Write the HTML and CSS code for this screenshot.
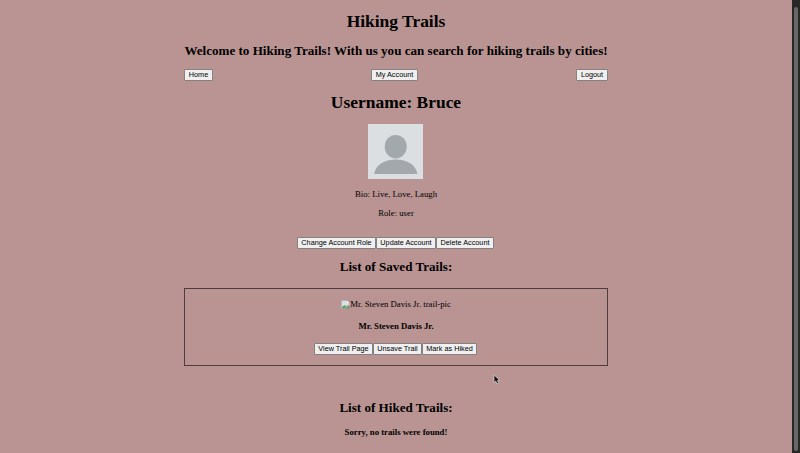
FILE: index.html
```html
<!DOCTYPE html>
<html lang="en">
<head>
<meta charset="utf-8">
<title>Hiking Trails</title>
<link rel="stylesheet" href="styles.css">
</head>
<body>
<div class="page">
  <main class="content">
    <h1 class="title">Hiking Trails</h1>
    <h2 class="welcome">Welcome to Hiking Trails! With us you can search for hiking trails by cities!</h2>
    <nav class="nav">
      <button class="w-home">Home</button>
      <button class="w-my">My Account</button>
      <button class="w-logout">Logout</button>
    </nav>
    <h1 class="username">Username: Bruce</h1>
    <svg class="avatar" viewBox="0 0 54 54">
      <rect width="54" height="54" fill="#dcdfe1"/>
      <ellipse cx="27.2" cy="22.3" rx="10.8" ry="11.6" fill="#a2a8ab"/>
      <path d="M6 49C7.5 40 16 34.8 27.2 34.8S47 40 48.5 49Z" fill="#a2a8ab"/>
    </svg>
    <p class="bio">Bio: Live, Love, Laugh</p>
    <p class="role">Role: user</p>
    <div class="actions">
      <button class="w-change">Change Account Role</button>
      <button class="w-update">Update Account</button>
      <button class="w-delete">Delete Account</button>
    </div>
    <h2 class="saved">List of Saved Trails:</h2>
    <section class="trail">
      <div class="trail-pic">
        <svg class="broken" viewBox="0 0 9 9">
          <path d="M.5 .5H5.8L8.3 3V5L5.5 6 3.8 8.3H.5Z" fill="#d5dfe7" stroke="#a9afb0" stroke-width=".5"/>
          <path d="M5.8 .5V3H8.3Z" fill="#f5f5f5"/>
          <path d="M.8 8.3C1.6 5.8 3.4 5 5.2 6.1L3.7 8.3ZM5 8.4L8.4 5.8V8.4Z" fill="#4ba450"/>
        </svg><span>Mr. Steven Davis Jr. trail-pic</span>
      </div>
      <h4 class="trail-name">Mr. Steven Davis Jr.</h4>
      <div class="trail-actions">
        <button class="w-view">View Trail Page</button>
        <button class="w-unsave">Unsave Trail</button>
        <button class="w-mark">Mark as Hiked</button>
      </div>
    </section>
    <h2 class="hiked">List of Hiked Trails:</h2>
    <h4 class="empty">Sorry, no trails were found!</h4>
  </main>
  <div class="scrollbar"><div class="thumb"></div></div>
</div>
<svg class="cursor" viewBox="0 0 8 11">
  <path d="M1 .8V8.6L2.8 7.1 4.1 9.8 5.7 9.1 4.5 6.4H6.7Z" fill="#111" stroke="#e4dcdc" stroke-width=".7"/>
</svg>
</body>
</html>
```

FILE: styles.css
```css
* {
  box-sizing: border-box;
}

body {
  margin: 0;
  overflow: hidden;
  background: #b99492;
  color: #000;
  font-family: "Liberation Serif", "Times New Roman", serif;
  font-size: 8.72px;
  line-height: 10px;
}

.page {
  display: flex;
  height: 453px;
}

.content {
  display: flex;
  flex: 1;
  flex-direction: column;
  align-items: center;
  text-align: center;
  white-space: nowrap;
}

h1, h2, h4, p {
  margin: 0;
}

h1 {
  font-size: 17.44px;
  line-height: 20px;
}

h2 {
  font-size: 13.08px;
  line-height: 16px;
}

h4 {
  font-size: 8.72px;
  line-height: 10px;
}

.title {
  margin-top: 11px;
}

.welcome {
  margin-top: 12px;
}

.nav {
  display: flex;
  justify-content: space-between;
  width: 424px;
  margin-top: 10px;
}

button {
  height: 12px;
  padding: 0 0 1px;
  border: 1px solid #858181;
  border-radius: 1px;
  background: #efefef;
  color: #000;
  font-family: "Liberation Sans", Arial, sans-serif;
  font-size: 7.27px;
  line-height: 8px;
  white-space: nowrap;
}

.w-home { width: 29px; }
.w-my { width: 47px; }
.w-logout { width: 32px; }
.w-change { width: 79px; }
.w-update { width: 60px; }
.w-delete { width: 58px; }
.w-view { width: 59px; }
.w-unsave { width: 49px; }
.w-mark { width: 55px; }

.username {
  margin-top: 11px;
}

.avatar {
  width: 55px;
  height: 55px;
  margin-top: 12px;
  margin-right: 1px;
}

.bio {
  margin-top: 10px;
}

.role {
  margin-top: 9px;
}

.actions,
.trail-actions {
  display: flex;
  justify-content: center;
  padding-right: 1px;
}

.actions {
  margin-top: 19px;
}

.saved {
  margin-top: 10px;
}

.trail {
  width: 424px;
  height: 78px;
  margin-top: 13px;
  padding-top: 10px;
  border: 1px solid #4d3d3c;
}

.trail-pic {
  display: flex;
  justify-content: center;
  align-items: center;
  height: 10px;
}

.broken {
  width: 9px;
  height: 9px;
}

.trail-name {
  margin-top: 12px;
}

.trail-actions {
  margin-top: 12px;
}

.hiked {
  margin-top: 34px;
}

.empty {
  margin-top: 11px;
}

.scrollbar {
  width: 8px;
  padding: 7px 2px 2px;
  background: #282828;
}

.thumb {
  width: 4px;
  height: 100%;
  border-radius: 2px;
  background: #686868;
}

.cursor {
  position: absolute;
  left: 493px;
  top: 374px;
  width: 8px;
  height: 11px;
}
```
